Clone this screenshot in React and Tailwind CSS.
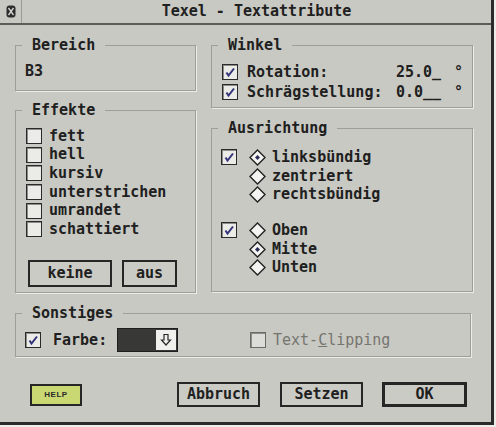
import React from "react";

const FONT = { fontFamily: '"DejaVu Sans Mono", "Liberation Mono", monospace' };

function T({ children, className = "" }) {
  return <span className={`inline-block leading-none ${className}`}>{children}</span>;
}

function CheckBox({ checked = false, disabled = false }) {
  return (
    <span
      className={`flex h-[16px] w-[16px] shrink-0 items-center justify-center border ${
        disabled ? "border-[#6a6a66] bg-[#dcdcd8]" : "border-[#2a2a2a] bg-[#ebebe7]"
      } shadow-[inset_1px_1px_0_#8c8c88]`}
    >
      {checked && (
        <svg width="12" height="12" viewBox="0 0 12 12">
          <path d="M2.5 6.5 L4.5 9.5 L10 2.5" fill="none" stroke="#34347a" strokeWidth="2" />
        </svg>
      )}
    </span>
  );
}

function Diamond({ selected = false }) {
  return (
    <svg width="17" height="17" viewBox="0 0 17 17" className="shrink-0">
      <polygon points="8.5,1 16,8.5 8.5,16 1,8.5" fill="#f4f4f0" stroke="#222" strokeWidth="1.4" />
      {selected && <polygon points="8.5,6 11,8.5 8.5,11 6,8.5" fill="#2c2c5a" />}
    </svg>
  );
}

function Group({ title, className, children }) {
  return (
    <fieldset className={`border border-[#9e9e9a] shadow-[1px_1px_0_#ececE8] ${className}`}>
      <legend className="ml-[6px] h-[19px] px-[10px] font-bold leading-[19px]">{title}</legend>
      {children}
    </fieldset>
  );
}

function Button({ children, className = "" }) {
  return (
    <button
      className={`flex items-center justify-center border-2 border-[#262626] bg-[#cbcbc6] font-bold leading-none ${className}`}
    >
      {children}
    </button>
  );
}

function RadioRow({ cb, label, sel }) {
  return (
    <div className="flex h-[18.7px] items-center">
      {cb ? <CheckBox checked /> : <span className="w-[16px]" />}
      <span className="ml-[12px]">
        <Diamond selected={sel} />
      </span>
      <T className="ml-[6px]">{label}</T>
    </div>
  );
}

const effekte = ["fett", "hell", "kursiv", "unterstrichen", "umrandet", "schattiert"];

export default function App() {
  return (
    <div className="min-h-screen w-full bg-[#ecece8]" style={FONT}>
      <div className="h-[425px] w-[494px] border-b-[3px] border-r-[3px] border-[#2a2a2a] bg-[#c9c9c3] text-[15px] text-[#202020]">
        {/* Title bar */}
        <div className="flex h-[25px] border-b-2 border-[#5c5c58]">
          <div className="flex w-[22px] items-center justify-center border-r border-[#9a9a96]">
            <svg width="10" height="13" viewBox="0 0 10 13">
              <rect x="0.5" y="0.5" width="9" height="12" rx="3" fill="#2c2c2c" />
              <path d="M2.5 3 L7.5 10 M7.5 3 L2.5 10" stroke="#d8d8d4" strokeWidth="1.3" />
            </svg>
          </div>
          <div className="flex flex-1 items-center justify-center font-bold">Texel - Textattribute</div>
        </div>

        {/* Body */}
        <div className="pl-[15px] pt-[11px]">
          <div className="flex gap-[15px]">
            {/* Left column */}
            <div className="flex w-[181px] flex-col gap-[10px]">
              <Group title="Bereich" className="h-[55px]">
                <div className="mt-[7px] flex h-[19px] items-center pl-[9px] font-bold">
                  <T>B3</T>
                </div>
              </Group>
              <Group title="Effekte" className="h-[192px]">
                <div className="flex flex-col pl-[10px] pt-[7px]">
                  {effekte.map((e) => (
                    <div key={e} className="flex h-[18.6px] items-center gap-[7px]">
                      <CheckBox />
                      <T className="font-bold">{e}</T>
                    </div>
                  ))}
                </div>
                <div className="mt-[21px] flex gap-[10px] pl-[12px]">
                  <Button className="h-[27px] w-[84px]">keine</Button>
                  <Button className="h-[27px] w-[55px]">aus</Button>
                </div>
              </Group>
            </div>

            {/* Right column */}
            <div className="flex w-[262px] flex-col">
              <Group title="Winkel" className="h-[72px]">
                <div className="flex flex-col pl-[10px] pt-[7px]">
                  {[
                    ["Rotation:", "25.0_"],
                    ["Schrägstellung:", "0.0__"],
                  ].map(([l, v]) => (
                    <div key={l} className="flex h-[20px] items-center font-bold">
                      <CheckBox checked />
                      <T className="ml-[9px] w-[149px]">{l}</T>
                      <T className="w-[58px]">{v}</T>
                      <T>°</T>
                    </div>
                  ))}
                </div>
              </Group>
              <Group title="Ausrichtung" className="mt-[11px] h-[173px]">
                <div className="flex flex-col pl-[9px] pt-[10px] font-bold">
                  <RadioRow cb label="linksbündig" sel />
                  <RadioRow label="zentriert" />
                  <RadioRow label="rechtsbündig" />
                  <div className="h-[17px]" />
                  <RadioRow cb label="Oben" />
                  <RadioRow label="Mitte" sel />
                  <RadioRow label="Unten" />
                </div>
              </Group>
            </div>
          </div>

          {/* Sonstiges */}
          <Group title="Sonstiges" className="mt-[11px] h-[53px] w-[456px]">
            <div className="mt-[5px] flex h-[24px] items-center pl-[9px]">
              <CheckBox checked />
              <T className="ml-[12px] w-[64px] font-bold">Farbe:</T>
              <div className="flex h-[24px] w-[61px] items-center justify-end border border-[#1e1e1e] bg-[#383836] pr-[1px]">
                <div className="flex h-[20px] w-[20px] items-center justify-center bg-[#f0f0ec]">
                  <svg width="12" height="14" viewBox="0 0 12 14">
                    <path d="M4 1.5 H8 V7 H10.5 L6 12 L1.5 7 H4 Z" fill="none" stroke="#2a2a2a" strokeWidth="1.2" />
                  </svg>
                </div>
              </div>
              <span className="ml-[72px]">
                <CheckBox disabled />
              </span>
              <T className="ml-[7px] text-[#75756f]">
                Text-<span className="underline">C</span>lipping
              </T>
            </div>
          </Group>

          {/* Buttons */}
          <div className="mt-[25px] flex h-[25px] items-center">
            <button
              className="ml-[15px] flex h-[22px] w-[52px] items-center justify-center border-2 border-[#262626] bg-[#c9d873] text-[8px] font-bold tracking-[0.5px] text-[#2a2a2a]"
              style={{ fontFamily: '"Liberation Sans", Arial, sans-serif' }}
            >
              HELP
            </button>
            <Button className="ml-[95px] h-[25px] w-[83px]">Abbruch</Button>
            <Button className="ml-[20px] h-[25px] w-[83px]">Setzen</Button>
            <Button className="ml-[19px] h-[25px] w-[85px] border-[3px]">OK</Button>
          </div>
        </div>
      </div>
    </div>
  );
}
